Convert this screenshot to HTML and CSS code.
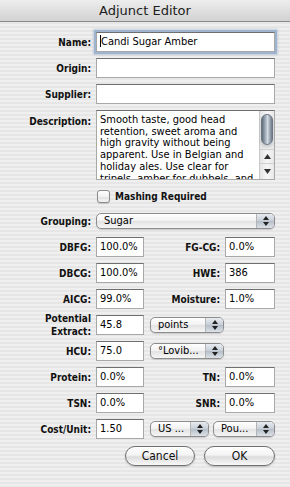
FILE: index.html
```html
<!DOCTYPE html>
<html>
<head>
<meta charset="utf-8">
<link rel="stylesheet" href="styles.css">
</head>
<body>
<div class="window">
  <div class="titlebar">Adjunct Editor</div>
  <div class="content">
    <div class="row">
      <div class="lbl">Name:</div>
      <div class="field wide focus"><span class="caret"></span>Candi Sugar Amber</div>
    </div>
    <div class="row">
      <div class="lbl">Origin:</div>
      <div class="field wide"></div>
    </div>
    <div class="row">
      <div class="lbl">Supplier:</div>
      <div class="field wide"></div>
    </div>
    <div class="row desc-row">
      <div class="lbl top">Description:</div>
      <div class="textarea">
        <div class="ta-text">Smooth taste, good head<br>retention, sweet aroma and<br>high gravity without being<br>apparent. Use in Belgian and<br>holiday ales. Use clear for<br>tripels, amber for dubbels, and</div>
        <div class="scrollbar">
          <div class="track"><div class="thumb"></div></div>
          <div class="sarrow up"><svg width="7" height="5" viewBox="0 0 7 5"><polygon points="0,5 3.5,0 7,5" fill="#333"/></svg></div>
          <div class="sarrow down"><svg width="7" height="5" viewBox="0 0 7 5"><polygon points="0,0 3.5,5 7,0" fill="#333"/></svg></div>
        </div>
      </div>
    </div>
    <div class="row check-row">
      <div class="checkbox"></div>
      <div class="check-lbl">Mashing Required</div>
    </div>
    <div class="row group-row">
      <div class="lbl">Grouping:</div>
      <div class="popup wide-pop"><span class="ptext">Sugar</span><span class="parrow"><svg width="6" height="10" viewBox="0 0 6 10"><polygon points="0,4 3,0 6,4" fill="#222"/><polygon points="0,6 3,10 6,6" fill="#222"/></svg></span></div>
    </div>
    <div class="row">
      <div class="lbl">DBFG:</div>
      <div class="field small">100.0%</div>
      <div class="plbl">FG-CG:</div>
      <div class="field rsmall">0.0%</div>
    </div>
    <div class="row">
      <div class="lbl">DBCG:</div>
      <div class="field small">100.0%</div>
      <div class="plbl">HWE:</div>
      <div class="field rsmall">386</div>
    </div>
    <div class="row">
      <div class="lbl">AICG:</div>
      <div class="field small">99.0%</div>
      <div class="plbl">Moisture:</div>
      <div class="field rsmall">1.0%</div>
    </div>
    <div class="row">
      <div class="lbl two">Potential<br>Extract:</div>
      <div class="field small">45.8</div>
      <div class="popup mid-pop"><span class="ptext">points</span><span class="parrow"><svg width="6" height="10" viewBox="0 0 6 10"><polygon points="0,4 3,0 6,4" fill="#222"/><polygon points="0,6 3,10 6,6" fill="#222"/></svg></span></div>
    </div>
    <div class="row">
      <div class="lbl">HCU:</div>
      <div class="field small">75.0</div>
      <div class="popup mid-pop"><span class="ptext">°Lovib...</span><span class="parrow"><svg width="6" height="10" viewBox="0 0 6 10"><polygon points="0,4 3,0 6,4" fill="#222"/><polygon points="0,6 3,10 6,6" fill="#222"/></svg></span></div>
    </div>
    <div class="row">
      <div class="lbl">Protein:</div>
      <div class="field small">0.0%</div>
      <div class="plbl">TN:</div>
      <div class="field rsmall">0.0%</div>
    </div>
    <div class="row">
      <div class="lbl">TSN:</div>
      <div class="field small">0.0%</div>
      <div class="plbl">SNR:</div>
      <div class="field rsmall">0.0%</div>
    </div>
    <div class="row">
      <div class="lbl">Cost/Unit:</div>
      <div class="field small">1.50</div>
      <div class="popup us-pop"><span class="ptext">US ...</span><span class="parrow"><svg width="6" height="10" viewBox="0 0 6 10"><polygon points="0,4 3,0 6,4" fill="#222"/><polygon points="0,6 3,10 6,6" fill="#222"/></svg></span></div>
      <div class="popup pou-pop"><span class="ptext">Pou...</span><span class="parrow"><svg width="6" height="10" viewBox="0 0 6 10"><polygon points="0,4 3,0 6,4" fill="#222"/><polygon points="0,6 3,10 6,6" fill="#222"/></svg></span></div>
    </div>
    <div class="row btn-row">
      <div class="btn cancel">Cancel</div>
      <div class="btn ok">OK</div>
    </div>
  </div>
</div>
</body>
</html>
```

FILE: styles.css
```css
* { box-sizing: border-box; }
html, body { margin: 0; padding: 0; }
body {
  width: 290px;
  height: 487px;
  overflow: hidden;
  font-family: "DejaVu Sans", "Liberation Sans", sans-serif;
  font-stretch: semi-condensed;
  color: #000;
  background: repeating-linear-gradient(to bottom, #efefef 0 2px, #e6e6e6 2px 4px);
}
.titlebar {
  height: 22px;
  background: linear-gradient(#ededed, #d2d2d2);
  border-bottom: 1px solid #8a8a8a;
  text-align: center;
  font-size: 13px;
  font-stretch: normal;
  line-height: 21px;
  color: #1c1c1c;
}
.content { padding-top: 10px; }
.row {
  display: flex;
  align-items: center;
  height: 20px;
  margin-bottom: 6px;
}
.lbl {
  width: 91px;
  flex: 0 0 91px;
  margin-right: 5px;
  text-align: right;
  font-weight: bold;
  font-size: 10px;
  color: #111;
  white-space: nowrap;
}
.lbl.two { line-height: 13px; }
.lbl.top { align-self: flex-start; padding-top: 6px; }
.plbl {
  width: 76px;
  flex: 0 0 76px;
  margin-right: 5px;
  text-align: right;
  font-weight: bold;
  font-size: 10px;
  color: #111;
  white-space: nowrap;
}
.field {
  height: 20px;
  border: 1px solid #a8a8a8;
  border-top-color: #6f6f6f;
  background: #fff;
  font-size: 11px;
  line-height: 18px;
  padding-left: 3px;
  white-space: nowrap;
  overflow: hidden;
}
.wide { width: 179px; }
.small { width: 48px; }
.rsmall { width: 50px; }
.focus {
  box-shadow: 0 0 0 2px #9fb4cf, 0 0 2px 3px rgba(120,150,190,0.35);
}
.caret {
  display: inline-block;
  width: 1px;
  height: 12px;
  background: #000;
  vertical-align: -2px;
  margin-right: 0px;
}
.desc-row { height: 70px; margin-bottom: 10px; align-items: stretch; }
.textarea {
  width: 179px;
  height: 70px;
  border: 1px solid #a8a8a8;
  border-top-color: #6f6f6f;
  background: #fff;
  display: flex;
  overflow: hidden;
}
.ta-text {
  flex: 1;
  font-size: 11px;
  line-height: 11.7px;
  padding: 3px 0 0 3px;
  white-space: nowrap;
  overflow: hidden;
}
.scrollbar {
  width: 15px;
  flex: 0 0 15px;
  border-left: 1px solid #c9c9c9;
  background: linear-gradient(to right, #e4e4e4, #f7f7f7 50%, #e8e8e8);
  display: flex;
  flex-direction: column;
}
.track { flex: 1; padding: 3px 1px 0 1px; }
.thumb {
  height: 31px;
  border-radius: 7px;
  border: 1px solid #6b7683;
  background: linear-gradient(to right, #5f6c7a, #b8c3cf 45%, #d3dbe3 55%, #6d7a88);
  box-shadow: 0 3px 3px rgba(0,0,0,0.15);
}
.sarrow {
  height: 14px;
  display: flex;
  align-items: center;
  justify-content: center;
  border-top: 1px solid #d0d0d0;
}
.sarrow.down { height: 16px; }
.check-row { height: 13px; margin-bottom: 10px; }
.checkbox {
  width: 13px;
  height: 13px;
  margin-left: 97px;
  border: 1px solid #8a8a8a;
  border-radius: 3px;
  background: linear-gradient(#ffffff, #f2f2f2 50%, #e0e0e0 51%, #f4f4f4);
  box-shadow: 0 1px 1px rgba(0,0,0,0.15);
}
.check-lbl {
  margin-left: 5px;
  font-weight: bold;
  font-size: 10px;
  color: #111;
}
.group-row { height: 16px; margin-bottom: 8px; }
.popup {
  height: 16px;
  display: flex;
  align-items: stretch;
  border: 1px solid #8c8c8c;
  border-radius: 5px;
  background: linear-gradient(#ffffff, #f1f1f1 50%, #e2e2e2 51%, #f6f6f6);
  font-size: 11px;
  overflow: hidden;
  box-shadow: 0 1px 1px rgba(0,0,0,0.15);
}
.ptext {
  flex: 1;
  padding-left: 7px;
  line-height: 14px;
  white-space: nowrap;
}
.parrow {
  width: 18px;
  flex: 0 0 18px;
  border-left: 1px solid #b4b4b4;
  background: linear-gradient(#e8ecf1, #c6cdd6 50%, #b4bdc8 51%, #dde2e8);
  display: flex;
  align-items: center;
  justify-content: center;
}
.wide-pop { width: 179px; }
.mid-pop { width: 74px; margin-left: 6px; }
.us-pop { width: 59px; margin-left: 6px; }
.pou-pop { width: 62px; margin-left: 4px; }
.btn-row { margin-top: 7px; margin-bottom: 0; }
.btn {
  height: 20px;
  border: 1px solid #707070;
  border-radius: 10px;
  background: linear-gradient(#ffffff, #f3f3f3 45%, #dcdcdc 55%, #f8f8f8);
  box-shadow: 0 1px 2px rgba(0,0,0,0.2);
  font-size: 12px;
  display: flex;
  align-items: center;
  justify-content: center;
  color: #111;
}
.cancel { width: 70px; margin-left: 125px; }
.ok { width: 71px; margin-left: 9px; }
```
